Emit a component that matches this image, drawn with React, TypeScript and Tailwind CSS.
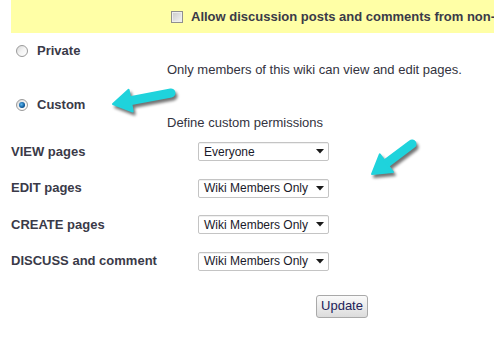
import React from "react";

const font = { fontFamily: '"Liberation Sans", Arial, sans-serif' };

function Radio({ checked }: { checked?: boolean }) {
  return (
    <span className="relative inline-flex h-[12px] w-[12px] shrink-0 items-center justify-center rounded-full border border-[#9a9a9a] bg-gradient-to-br from-[#d8d8d8] via-[#f4f4f4] to-[#ffffff]">
      {checked && (
        <span className="h-[6px] w-[6px] rounded-full bg-[radial-gradient(circle_at_40%_40%,#5fb8f0,#0d5a9c_60%,#062c55)]" />
      )}
    </span>
  );
}

function Select({ value }: { value: string }) {
  return (
    <div className="flex h-[19px] w-[131px] items-center justify-between rounded-[2px] border border-[#c4c4c4] bg-white pl-[5px] pr-[4px] text-[12px] text-[#1a1a2a] shadow-[inset_0_1px_0_#f0f0f0]">
      <span className="leading-none">{value}</span>
      <svg width="8" height="5" viewBox="0 0 8 5">
        <polygon points="0,0 8,0 4,4.5" fill="#1a1a1a" />
      </svg>
    </div>
  );
}

const rows = [
  { label: "VIEW pages", value: "Everyone" },
  { label: "EDIT pages", value: "Wiki Members Only" },
  { label: "CREATE pages", value: "Wiki Members Only" },
  { label: "DISCUSS and comment", value: "Wiki Members Only" },
];

function Arrow({ x1, y1, x2, y2 }: { x1: number; y1: number; x2: number; y2: number }) {
  const dx = x2 - x1;
  const dy = y2 - y1;
  const len = Math.hypot(dx, dy);
  const ux = dx / len;
  const uy = dy / len;
  const px = -uy;
  const py = ux;
  const headLen = 18;
  const headW = 11;
  const bx = x2 - ux * headLen;
  const by = y2 - uy * headLen;
  const shaftEndX = x2 - ux * (headLen - 4);
  const shaftEndY = y2 - uy * (headLen - 4);
  const head = `${x2},${y2} ${bx + px * headW},${by + py * headW} ${bx - px * headW},${by - py * headW}`;
  return (
    <g>
      <g transform="translate(2,3)" opacity="0.55" filter="url(#blur)">
        <line x1={x1} y1={y1} x2={shaftEndX} y2={shaftEndY} stroke="#000" strokeWidth="9" strokeLinecap="round" />
        <polygon points={head} fill="#000" strokeLinejoin="round" stroke="#000" strokeWidth="2" />
      </g>
      <line x1={x1} y1={y1} x2={shaftEndX} y2={shaftEndY} stroke="#1fd3dc" strokeWidth="9" strokeLinecap="round" />
      <polygon points={head} fill="#1fd3dc" stroke="#1fd3dc" strokeWidth="2" strokeLinejoin="round" />
    </g>
  );
}

export default function App() {
  return (
    <div className="relative h-[338px] w-[494px] overflow-hidden bg-white text-[#333344]" style={font}>
      <div className="ml-[11px] flex h-[33px] items-center overflow-hidden whitespace-nowrap bg-[#ffffa6] pl-[160px]">
        <span className="mr-[8px] inline-block h-[12px] w-[12px] shrink-0 border border-[#8f8f8f] bg-gradient-to-br from-[#c9c9c9] to-[#f5f5f5] shadow-[inset_0_0_0_1px_#eeeeee]" />
        <span className="text-[13px] font-bold text-[#3a3a48]">Allow discussion posts and comments from non-</span>
      </div>

      <div className="mt-[10px] flex h-[16px] items-center pl-[16px]">
        <Radio />
        <span className="ml-[9px] text-[13px] font-bold text-[#3a3a48]">Private</span>
      </div>
      <div className="mt-[3px] h-[15px] pl-[167px] text-[13px] leading-[15px] text-[#333340]">
        Only members of this wiki can view and edit pages.
      </div>

      <div className="mt-[20px] flex h-[16px] items-center pl-[16px]">
        <Radio checked />
        <span className="ml-[9px] text-[13px] font-bold text-[#3a3a48]">Custom</span>
      </div>
      <div className="mt-[2px] h-[15px] pl-[167px] text-[13px] leading-[15px] text-[#333340]">
        Define custom permissions
      </div>

      <div className="mt-[12px] flex flex-col gap-[17.5px] pl-[11px]">
        {rows.map((r) => (
          <div key={r.label} className="flex h-[19px] items-center">
            <span className="w-[187px] text-[13px] font-bold text-[#3a3a48]">{r.label}</span>
            <Select value={r.value} />
          </div>
        ))}
      </div>

      <div className="mt-[24px] flex pl-[316px]">
        <button className="flex h-[23px] w-[52px] items-center justify-center rounded-[3px] border border-[#a9a9a9] bg-gradient-to-b from-[#fafafa] to-[#dcdcdc] text-[13px] text-[#22225a]">
          Update
        </button>
      </div>

      <svg className="pointer-events-none absolute left-0 top-0" width="494" height="338">
        <defs>
          <filter id="blur" x="-20%" y="-20%" width="140%" height="140%">
            <feGaussianBlur stdDeviation="1.5" />
          </filter>
        </defs>
        <Arrow x1={171} y1={93} x2={113} y2={104} />
        <Arrow x1={412} y1={144} x2={372} y2={174} />
      </svg>
    </div>
  );
}
